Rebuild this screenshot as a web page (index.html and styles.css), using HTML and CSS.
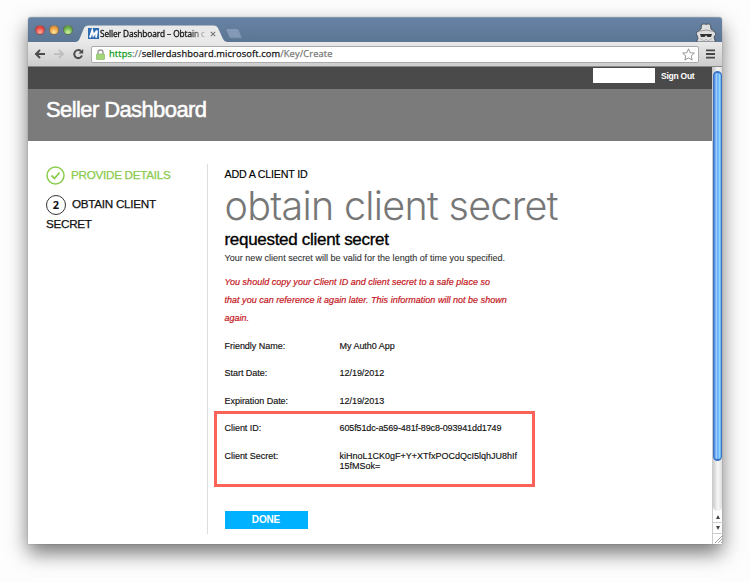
FILE: index.html
```html
<!DOCTYPE html>
<html lang="en">
<head>
<meta charset="utf-8">
<title>Seller Dashboard</title>
<link rel="stylesheet" href="styles.css">
</head>
<body>
<div class="window">
  <div class="tabstrip">
    <div class="lights"><i class="light red"></i><i class="light amber"></i><i class="light green"></i></div>
    <div class="tab">
      <svg class="tab-shape" width="151" height="17" viewBox="0 0 151 17"><path d="M0 17Q2.500 16.500 3.500 14L8 3Q9 .5 12 .5H138Q141 .5 142 3L147 14Q148 16.500 151 17Z" fill="#e9e9e9"/></svg>
      <svg class="favicon" width="11" height="11" viewBox="0 0 11 11"><rect width="11" height="11" fill="#2e6db4"/><path d="M2 9.500 4.200 2.500 5.400 7.500 9 2.500 8 9.500" fill="none" stroke="#fff" stroke-width="1.900"/></svg>
      <span class="tab-title">Seller Dashboard – Obtain c</span>
      <svg class="tab-close" width="6" height="6" viewBox="0 0 6 6"><path d="M.8.8 5.2 5.2M5.2.8.8 5.2" stroke="#777" stroke-width="1.1"/></svg>
    </div>
    <svg class="newtab" width="18" height="11" viewBox="0 0 18 11"><path d="M1.5.5H12Q13.5.5 14 2L16.8 9Q17 10.200 16 10.200H6Q4.500 10.200 4 9L1 2Q.5.5 1.500.5Z" fill="#8399b5" stroke="#607997" stroke-width=".7"/></svg>
    <svg class="incognito" width="22" height="19" viewBox="0 0 22 19">
      <path d="M1.500 19 3 15 1 10 4 7.500 6 6 6.500 1.500 9 .8 11 1.300 14 .8 15.500 2 16 6 19 8 21 11 19 14 20.500 19Z" fill="#dedede" stroke="#4b5563" stroke-width="1"/>
      <path d="M3 8.500Q11 5.500 19 8.500" fill="none" stroke="#888" stroke-width=".8"/>
      <path d="M5 11H17L16 14H12.500L11 12.300 9.500 14H6Z" fill="#333"/>
      <path d="M5 15.500 9 18 11 16 13 18 17 15.500" fill="none" stroke="#b0b0b0" stroke-width=".8"/>
    </svg>
  </div>
  <div class="toolbar">
    <svg class="nav" width="52" height="12" viewBox="0 0 52 12" fill="none" stroke-width="2">
      <path d="M11 6H2M6 2 2 6 6 10" stroke="#4c4c4c"/>
      <path d="M20 6H29M25 2 29 6 25 10" stroke="#c0c0c0"/>
      <path d="M47 3.200A4 4 0 1 0 48 7.500" stroke="#4c4c4c"/><path d="M49.200 1V5.500H44.500Z" fill="#4c4c4c"/>
    </svg>
    <div class="omnibox">
      <svg width="9" height="11" viewBox="0 0 9 11"><path d="M2 6V3.200Q2 1 4.500 1T7 3.200V6" fill="none" stroke="#999" stroke-width="1.4"/><rect x=".5" y="5" width="8" height="5.500" rx=".6" fill="#a3d67a" stroke="#7fae5e" stroke-width=".6"/></svg>
      <span class="url"><span class="scheme">https</span><span class="dim">://</span>sellerdashboard.microsoft.com<span class="dim">/Key/Create</span></span>
      <svg class="star" width="13" height="13" viewBox="0 0 13 13"><path d="M6.500.8 8.200 4.800 12.400 5.100 9.200 7.900 10.200 12.100 6.500 9.900 2.800 12.100 3.800 7.900.6 5.100 4.800 4.800Z" fill="#fff" stroke="#8b8b8b" stroke-width=".9" stroke-linejoin="round"/></svg>
    </div>
    <svg class="menu" width="9" height="10" viewBox="0 0 9 10"><path d="M0 1.400H9M0 5H9M0 8.600H9" stroke="#474747" stroke-width="1.900"/></svg>
  </div>
  <div class="viewport">
    <div class="page">
      <div class="userbar"><span class="username"></span><a class="signout">Sign Out</a></div>
      <header class="banner">Seller Dashboard</header>
      <div class="body">
        <nav class="steps">
          <div class="step done"><svg width="19" height="19" viewBox="0 0 19 19" fill="none" stroke="#8bcb4c"><circle cx="9.500" cy="9.500" r="8.500" stroke-width="1.500"/><path d="M5.500 9.500 8.500 12.500 13.500 6.500" stroke-width="1.800"/></svg><span>PROVIDE DETAILS</span></div>
          <div class="step current"><b class="num">2</b><span>OBTAIN CLIENT</span></div>
          <div class="step-rest">SECRET</div>
        </nav>
        <main class="content">
          <div class="crumb">ADD A CLIENT ID</div>
          <h1>obtain client secret</h1>
          <h2>requested client secret</h2>
          <p class="note">Your new client secret will be valid for the length of time you specified.</p>
          <p class="warning">You should copy your Client ID and client secret to a safe place so<br>that you can reference it again later. This information will not be shown<br>again.</p>
          <dl class="details">
            <dt>Friendly Name:</dt><dd>My Auth0 App</dd>
            <dt>Start Date:</dt><dd>12/19/2012</dd>
            <dt>Expiration Date:</dt><dd>12/19/2013</dd>
            <dt>Client ID:</dt><dd class="id">605f51dc-a569-481f-89c8-093941dd1749</dd>
            <dt>Client Secret:</dt><dd class="secret">kiHnoL1CK0gF+Y+XTfxPOCdQcI5lqhJU8hIf<br>15fMSok=</dd>
          </dl>
          <div class="highlight"></div>
          <button class="submit">DONE</button>
        </main>
      </div>
    </div>
    <div class="scrollbar">
      <div class="track"><div class="thumb"></div></div>
      <svg width="10" height="33" viewBox="0 0 10 33"><path d="M0 11.500H10M0 22.500H10" stroke="#ccc"/><path d="M5 4 7 8H3ZM5 19 7 15H3Z" fill="#444"/><path d="M2 32 9.500 24.500M5 32 9.500 27.500M8 32 9.500 30.500" stroke="#999" stroke-width=".9"/></svg>
    </div>
  </div>
</div>
</body>
</html>
```
FILE: styles.css
```css
* { box-sizing: border-box; }
body { margin: 0; width: 750px; height: 582px; overflow: hidden; background: #fdfdfd; padding: 17px 28px; font-family: "Liberation Sans", Arial, sans-serif; }
.window { width: 694px; height: 527px; display: flex; flex-direction: column; background: #fff; border-radius: 3px 3px 0 0; box-shadow: 0 0 1px rgba(0,0,0,.5), 0 9px 20px rgba(0,0,0,.54); }
.tabstrip { height: 25px; display: flex; align-items: flex-end; background: linear-gradient(#6882a5, #5b7593); border-top: 1px solid #8397ad; border-radius: 3px 3px 0 0; }
.lights { display: flex; gap: 4px; margin: 0 0 7px 7px; width: 42px; }
.light { width: 10px; height: 10px; border-radius: 50%; border: 1px solid rgba(80,70,80,.6); }
.red { background: radial-gradient(circle at 50% 80%, #ffb0a0, #e8443f 65%); }
.amber { background: radial-gradient(circle at 50% 80%, #ffe9a0, #e99b3c 65%); }
.green { background: radial-gradient(circle at 50% 80%, #d3f5a8, #67ad45 65%); }
.tab { position: relative; width: 151px; height: 17px; display: flex; align-items: center; margin-left: -1px; padding-left: 12px; }
.tab-shape { position: absolute; left: 0; top: 0; }
.favicon, .tab-title, .tab-close { position: relative; flex: none; }
.tab-title { width: 107px; margin-left: 1px; white-space: nowrap; font: 8.300px/16px "Open Sans", sans-serif; letter-spacing: -.09px; color: #111; -webkit-text-stroke: .3px #111; -webkit-mask-image: linear-gradient(90deg, #000 84%, transparent); mask-image: linear-gradient(90deg, #000 84%, transparent); }
.tab-close { margin-left: 3px; }
.newtab { margin: 0 0 3px -2px; }
.incognito { margin-left: auto; margin-right: 5px; }
.toolbar { height: 25px; display: flex; align-items: center; background: linear-gradient(#e9e9e9, #cdcdcd); border-bottom: 1px solid #888; }
.nav { margin-left: 6px; }
.omnibox { display: flex; align-items: center; width: 608px; height: 17px; margin-left: 5px; padding: 0 3px 0 4px; background: #fff; border: 1px solid #aaa; border-radius: 2px; }
.url { margin-left: 4px; font: 9.3px/14px "Open Sans", sans-serif; letter-spacing: .12px; color: #111; white-space: nowrap; -webkit-text-stroke: .25px; }
.scheme { color: #0a9a16; }
.dim { color: #777; }
.star { margin-left: auto; }
.menu { margin-left: 7px; }
.viewport { display: flex; flex: 1; min-height: 0; }
.page { width: 684px; }
.userbar { height: 22px; display: flex; align-items: flex-start; justify-content: flex-end; background: #4a4a4a; padding: 1px 17px 0 0; }
.username { width: 62px; height: 15px; background: #fff; }
.signout { width: 34px; margin-left: 6px; font-weight: bold; font-size: 8.500px; line-height: 16px; letter-spacing: -.25px; color: #fff; white-space: nowrap; }
.banner { height: 52px; background: #7b7b7b; color: #fff; padding-left: 18px; font-size: 22px; line-height: 41px; letter-spacing: -.6px; -webkit-text-stroke: .5px #fff; }
.body { display: flex; padding-top: 23px; }
.steps { width: 162px; padding: 2px 0 0 18px; font-size: 11.700px; letter-spacing: -.28px; line-height: 18px; color: #111; -webkit-text-stroke: .25px; }
.step { display: flex; gap: 6px; }
.done { color: #8bcb4c; }
.current { margin-top: 10px; }
.num { width: 20px; height: 20px; border: 1.500px solid #333; border-radius: 50%; font: bold 11px/17px "Open Sans", sans-serif; text-align: center; letter-spacing: 0; -webkit-text-stroke: 0; }
.step-rest { line-height: 17px; }
.content { position: relative; width: 360px; height: 370px; margin-left: 17px; border-left: 1px solid #ddd; padding-left: 16.500px; color: #111; }
.crumb { font-size: 10.700px; line-height: 20px; letter-spacing: -.2px; color: #000; -webkit-text-stroke: .15px; }
h1 { margin: 0; font: 300 39.500px/44px Inter, sans-serif; letter-spacing: -.72px; color: #777; white-space: nowrap; }
h2 { margin: 0; font-weight: normal; font-size: 17px; line-height: 23px; height: 22px; letter-spacing: -.3px; color: #000; -webkit-text-stroke: .35px; }
p { margin: 0; font-size: 9px; white-space: nowrap; -webkit-text-stroke: .1px; }
.note { line-height: 16px; color: #333; letter-spacing: .03px; }
.warning { margin-top: 7px; line-height: 18px; color: #c4161c; font-style: italic; letter-spacing: .02px; -webkit-text-stroke: .2px; }
.details { display: grid; grid-template-columns: 115px 185px; grid-auto-rows: 27.500px; margin: 13.500px 0 0; font-size: 9px; line-height: 10px; letter-spacing: -.03px; -webkit-text-stroke: .15px; }
dd { margin: 0; white-space: nowrap; }
.id { letter-spacing: -.12px; }
.secret { letter-spacing: 0; }
.highlight { position: absolute; left: 5.500px; top: 247px; width: 321px; height: 76px; border: 3.500px solid #fb6258; }
.submit { display: block; width: 83px; height: 18px; margin-top: 32.500px; padding: 0; border: 0; background: #00b1ff; color: #fff; font: bold 10px/18px "Liberation Sans", sans-serif; letter-spacing: -.15px; }
.scrollbar { width: 10px; display: flex; flex-direction: column; background: #fff; border-left: 1px solid #ccc; }
.track { flex: 1; padding-top: 4px; background: linear-gradient(90deg, #ccc, #f8f8f8 55%, #ddd); border-radius: 0 0 5px 5px; }
.thumb { height: 390px; border-radius: 5px; border: 1px solid #3a74c5; border-width: 2px 1px; background: linear-gradient(90deg, #3d7fd9, #a5ceff 35%, #57a7f5 55%, #a4e4ff 85%, #4c92dd); }
```
